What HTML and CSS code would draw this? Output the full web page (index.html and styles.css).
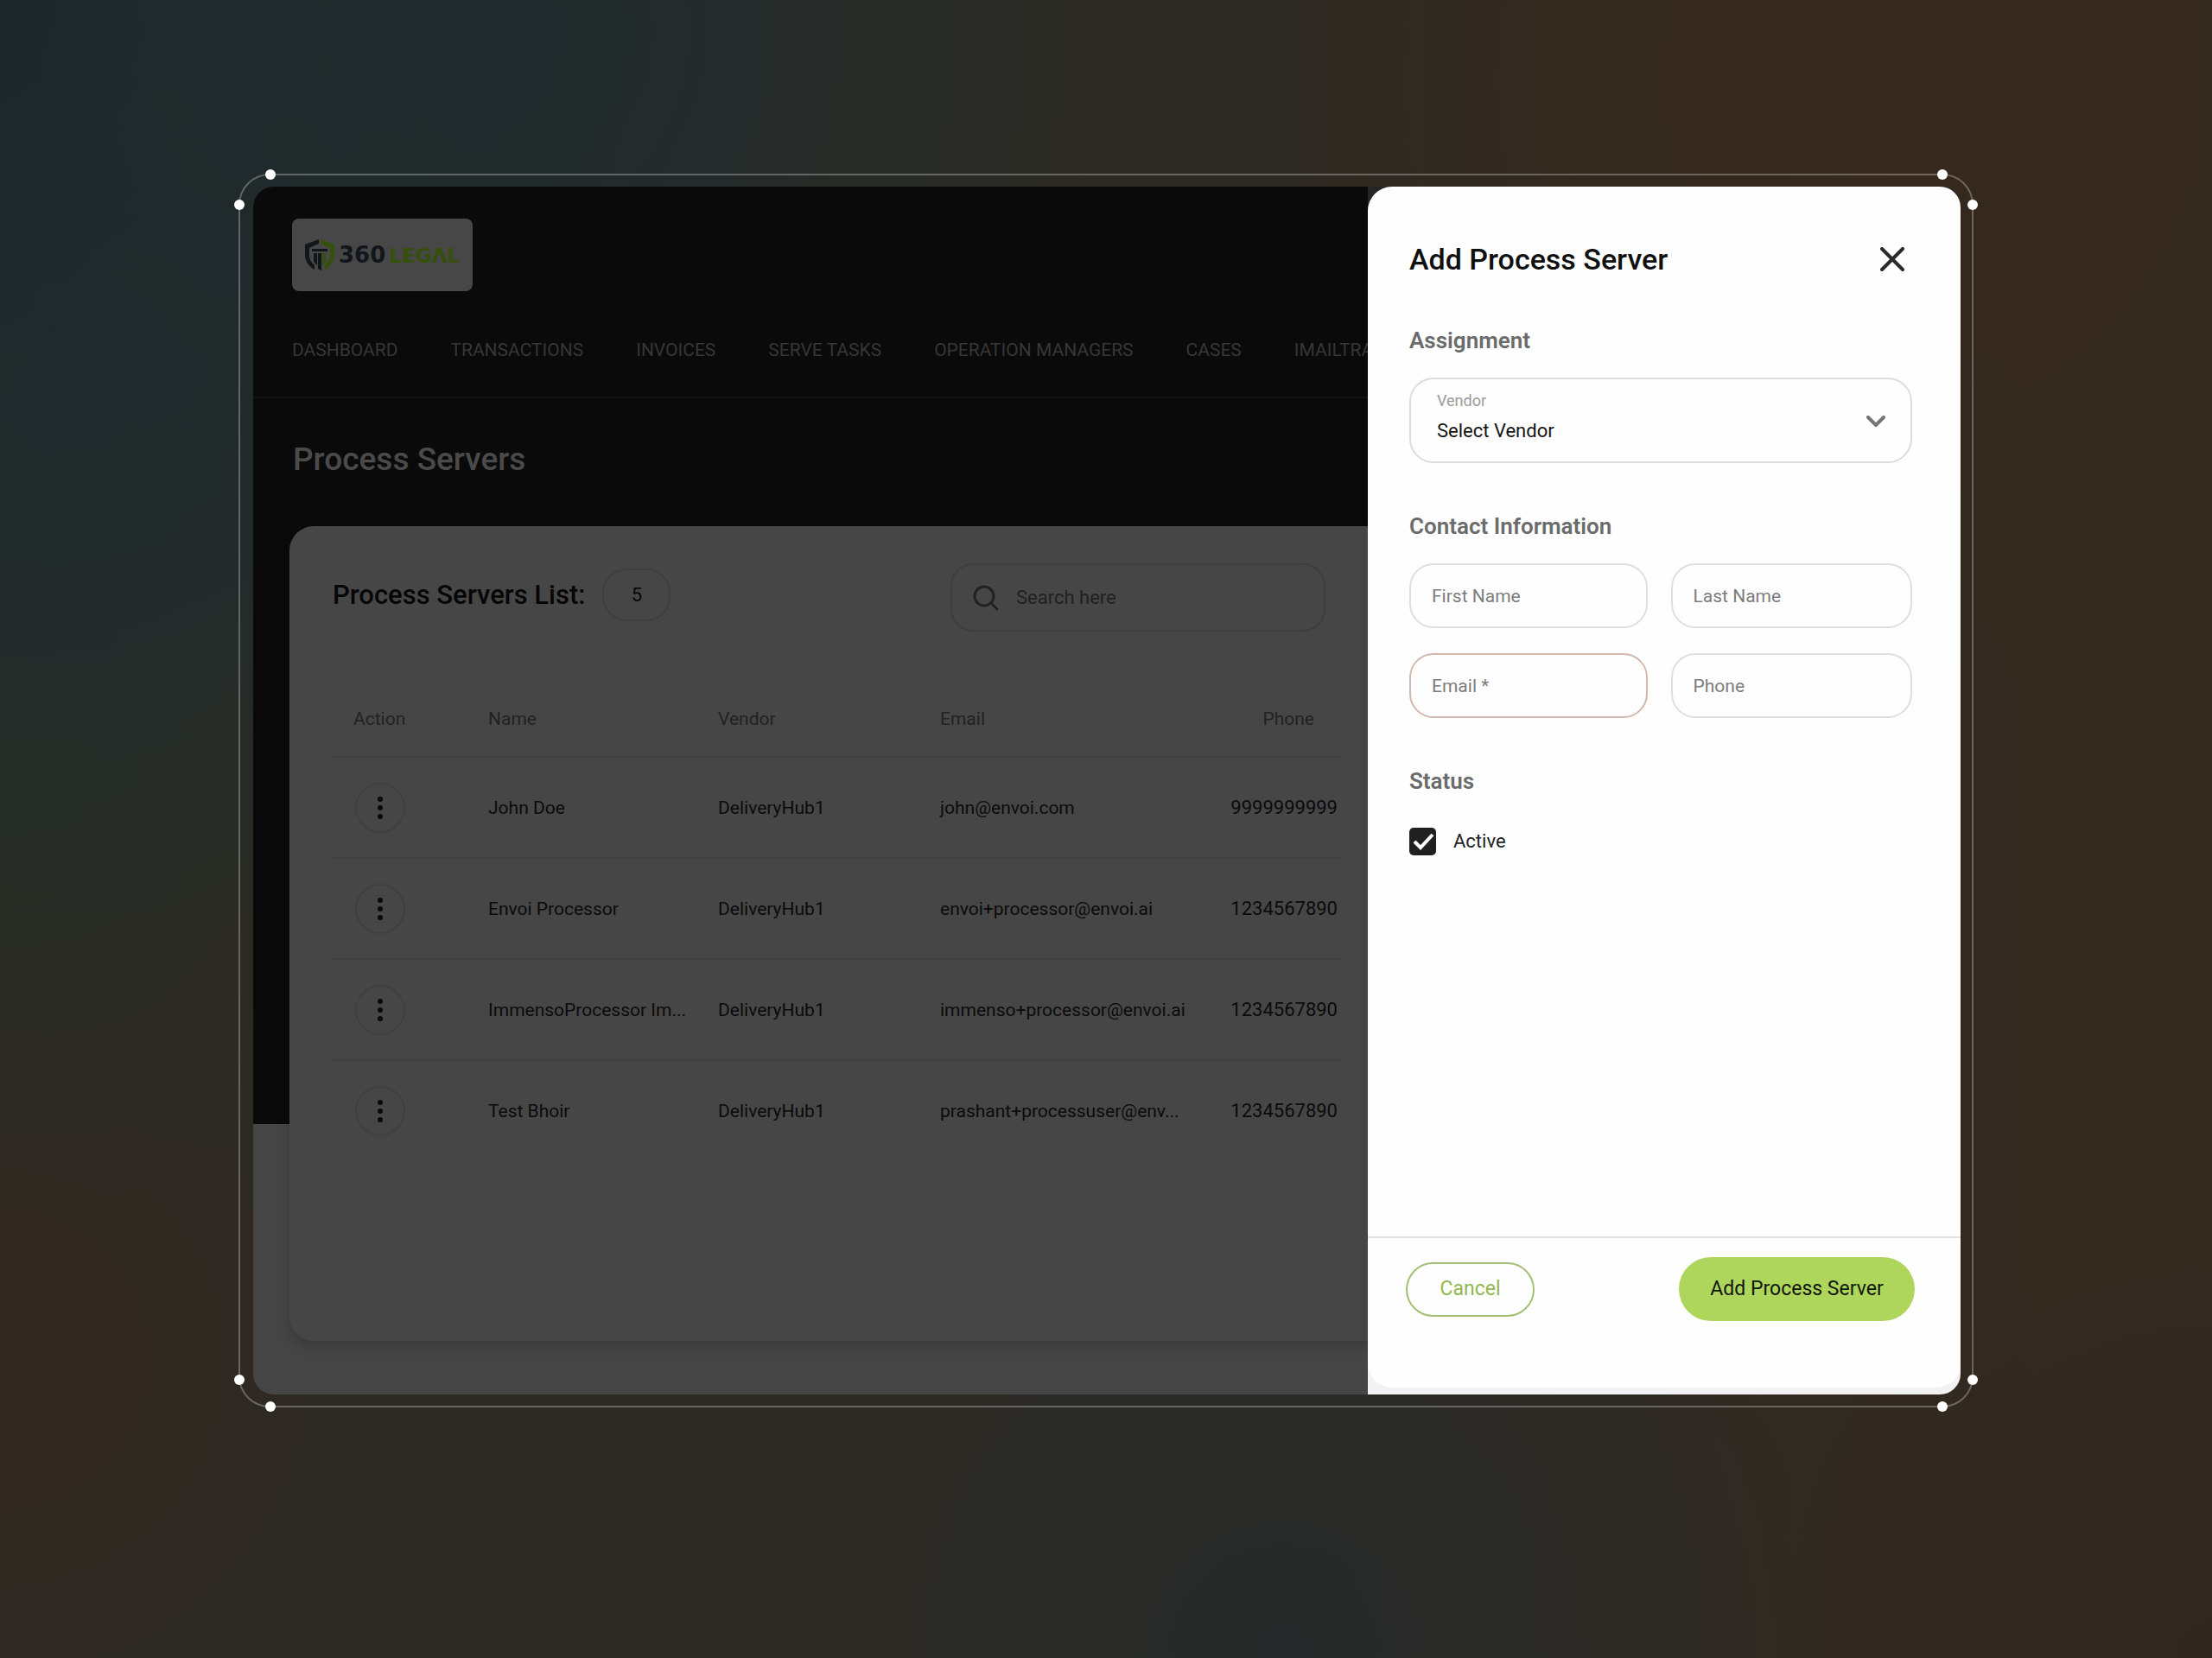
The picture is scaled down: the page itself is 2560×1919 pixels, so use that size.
FILE: index.html
```html
<!DOCTYPE html>
<html lang="en">
<head>
<meta charset="utf-8">
<title>Process Servers</title>
<link rel="stylesheet" href="styles.css">
</head>
<body>
<div class="frame">
  <i class="dot tl-a"></i><i class="dot tl-b"></i><i class="dot tr-a"></i><i class="dot tr-b"></i>
  <i class="dot bl-a"></i><i class="dot bl-b"></i><i class="dot br-a"></i><i class="dot br-b"></i>
  <div class="window">
    <div class="app">
      <header class="header">
        <a class="logo" href="#">
          <svg class="logo-mark" viewBox="0 0 34 36" aria-hidden="true">
            <path class="ink" d="M16 0v5L5 10v8c0 5 2 9 6 12v5C4 31 0 25 0 18V6z"/>
            <path class="lime" d="M18 0v5l11 5v8c0 5-2 9-6 12v5c7-4 11-10 11-17V6z"/>
            <path class="ink" d="M8 11h18v3H8zM10 16h4v14l-4-4zM15 16h4v20l-2-1-2-1z"/>
            <path class="lime" d="M20 16h4v11l-4 4z"/>
          </svg>
          <span class="logo-text"><span class="logo-num">360</span><span class="logo-legal">LEGΛL</span></span>
        </a>
        <nav class="nav">
          <a href="#">DASHBOARD</a><a href="#">TRANSACTIONS</a><a href="#">INVOICES</a><a href="#">SERVE TASKS</a><a href="#">OPERATION MANAGERS</a><a href="#">CASES</a><a href="#">IMAILTRA</a>
        </nav>
      </header>
      <h1 class="page-title">Process Servers</h1>
      <main class="card">
        <div class="toolbar">
          <div class="list-title"><h2>Process Servers List:</h2><span class="count">5</span></div>
          <label class="search">
            <svg viewBox="0 0 30 30" aria-hidden="true"><circle cx="13" cy="13" r="11"/><path d="M21 21l7 7"/></svg>
            <input type="search" placeholder="Search here" aria-label="Search here">
          </label>
        </div>
        <table class="table">
          <colgroup><col class="c-action"><col class="c-name"><col class="c-vendor"><col class="c-email"><col></colgroup>
          <thead>
            <tr><th>Action</th><th>Name</th><th>Vendor</th><th>Email</th><th>Phone</th></tr>
          </thead>
          <tbody>
            <tr><td><button class="more" aria-label="Row actions"><svg viewBox="0 0 8 28"><circle cx="4" cy="4" r="3"/><circle cx="4" cy="14" r="3"/><circle cx="4" cy="24" r="3"/></svg></button></td><td>John Doe</td><td>DeliveryHub1</td><td>john@envoi.com</td><td>9999999999</td></tr>
            <tr><td><button class="more" aria-label="Row actions"><svg viewBox="0 0 8 28"><circle cx="4" cy="4" r="3"/><circle cx="4" cy="14" r="3"/><circle cx="4" cy="24" r="3"/></svg></button></td><td>Envoi Processor</td><td>DeliveryHub1</td><td>envoi+processor@envoi.ai</td><td>1234567890</td></tr>
            <tr><td><button class="more" aria-label="Row actions"><svg viewBox="0 0 8 28"><circle cx="4" cy="4" r="3"/><circle cx="4" cy="14" r="3"/><circle cx="4" cy="24" r="3"/></svg></button></td><td>ImmensoProcessor Im...</td><td>DeliveryHub1</td><td>immenso+processor@envoi.ai</td><td>1234567890</td></tr>
            <tr><td><button class="more" aria-label="Row actions"><svg viewBox="0 0 8 28"><circle cx="4" cy="4" r="3"/><circle cx="4" cy="14" r="3"/><circle cx="4" cy="24" r="3"/></svg></button></td><td>Test Bhoir</td><td>DeliveryHub1</td><td>prashant+processuser@env...</td><td>1234567890</td></tr>
          </tbody>
        </table>
      </main>
    </div>
    <aside class="drawer-wrap">
      <form class="drawer">
        <div class="drawer-body">
          <div class="drawer-head">
            <h2>Add Process Server</h2>
            <button type="button" class="close" aria-label="Close"><svg viewBox="0 0 28 28"><path d="M2 2l24 24M26 2L2 26"/></svg></button>
          </div>
          <h3>Assignment</h3>
          <div class="select">
            <label for="vendor">Vendor</label>
            <select id="vendor"><option>Select Vendor</option></select>
            <svg class="chevron" viewBox="0 0 22 14" aria-hidden="true"><path d="M2 2l9 9 9-9"/></svg>
          </div>
          <h3>Contact Information</h3>
          <div class="fields">
            <input type="text" placeholder="First Name" aria-label="First Name">
            <input type="text" placeholder="Last Name" aria-label="Last Name">
            <input class="required" type="email" placeholder="Email *" aria-label="Email">
            <input type="tel" placeholder="Phone" aria-label="Phone">
          </div>
          <h3>Status</h3>
          <label class="check"><input type="checkbox" checked><svg viewBox="0 0 32 32" aria-hidden="true"><path d="M6 16l7 7L27 8"/></svg>Active</label>
        </div>
        <div class="drawer-foot">
          <button type="button" class="btn-cancel">Cancel</button>
          <button type="submit" class="btn-add">Add Process Server</button>
        </div>
      </form>
    </aside>
  </div>
</div>
</body>
</html>
```
FILE: styles.css
```css
* { box-sizing: border-box; }

body {
  margin: 0;
  min-height: 100vh;
  display: flex;
  padding: 201px 276px 290px;
  font-family: Roboto, "Liberation Sans", sans-serif;
  font-size: 22px;
  line-height: 28px;
  background:
    radial-gradient(circle at 22% 2%, #202b2d 0, transparent 28%),
    radial-gradient(circle at 0% 0%, #1c2629 0, transparent 30%),
    radial-gradient(circle at 3% 25%, #222e2e 0, transparent 22%),
    radial-gradient(circle at 0% 48%, #262b23 0, transparent 18%),
    radial-gradient(circle at 0% 82%, #32271f 0, transparent 14%),
    radial-gradient(circle at 84% 5%, #36281c 0, transparent 26%),
    radial-gradient(circle at 58% 100%, #262929 0, transparent 26%),
    radial-gradient(circle at 100% 100%, #30261e 0, transparent 16%),
    linear-gradient(90deg, #2c2a23 60%, #32291f 92%);
}

h1, h2, h3 { margin: 0; font-weight: 500; }
a { color: inherit; text-decoration: none; }
button, input, select { font: inherit; color: inherit; margin: 0; }
input::placeholder { color: inherit; opacity: 1; }

/* Outline with handles around the window */
.frame {
  position: relative;
  flex: 1;
  min-width: 0;
  display: flex;
  padding: 13px 13px 13px 15px;
  border: 2px solid #ffffff48;
  border-radius: 36px;
}
.dot {
  position: absolute;
  width: 12px;
  height: 12px;
  border-radius: 50%;
  background: #fff;
}
.tl-a, .tr-a { top: -7px; }
.bl-a, .br-a { bottom: -7px; }
.tl-a, .bl-a { left: 29px; }
.tr-a, .br-a { right: 28px; }
.tl-b, .tr-b { top: 28px; }
.bl-b, .br-b { bottom: 24px; }
.tl-b, .bl-b { left: -7px; }
.tr-b, .br-b { right: -7px; }

.window {
  flex: 1;
  min-width: 0;
  display: grid;
  grid-template-columns: minmax(0, 1fr) 686px;
  border-radius: 24px;
  overflow: hidden;
}

/* Dimmed page behind the drawer */
.app {
  display: flex;
  flex-direction: column;
  overflow: hidden;
  background: linear-gradient(#0a0a0a 1085px, #454546 1085px);
}
.header {
  padding: 37px 0 40px 45px;
  border-bottom: 2px solid #131313;
}
.logo {
  display: flex;
  align-items: center;
  gap: 5px;
  width: 209px;
  height: 84px;
  padding: 0 10px 0 15px;
  border-radius: 8px;
  background: #474747;
}
.logo-mark { width: 34px; height: 36px; flex: none; }
.ink { fill: #12161b; }
.lime { fill: #35500a; }
.logo-text {
  display: flex;
  align-items: baseline;
  gap: 4px;
  font: 700 23px/32px "DejaVu Sans", sans-serif;
}
.logo-num { font-size: 26px; color: #12161b; }
.logo-legal { color: #35500a; }
.nav {
  display: flex;
  gap: 61px;
  margin-top: 54px;
  font-size: 21px;
  white-space: nowrap;
  color: #363636;
}
.page-title {
  margin: 47px 0 53px 46px;
  font-size: 37px;
  line-height: 48px;
  color: #4a4a4a;
}
.card {
  flex: 1;
  margin: 0 0 62px 42px;
  padding: 43px 32px 0 50px;
  border-radius: 28px 0 0 28px;
  background: #464646;
  box-shadow: 0 6px 16px #0000002b;
}
.toolbar {
  display: flex;
  justify-content: space-between;
  align-items: flex-start;
  padding-right: 17px;
}
.list-title {
  display: flex;
  align-items: center;
  gap: 20px;
  margin-top: 6px;
  color: #060606;
}
.list-title h2 { font-size: 31px; line-height: 44px; }
.count {
  width: 79px;
  height: 61px;
  display: grid;
  place-items: center;
  border: 2px solid #3f3f3f;
  border-radius: 28px;
}
.search {
  display: flex;
  align-items: center;
  gap: 20px;
  width: 434px;
  height: 79px;
  padding: 0 24px;
  border: 2px solid #3e3e3e;
  border-radius: 26px;
  color: #212121;
}
.search svg { width: 30px; height: 30px; flex: none; fill: none; stroke: #222; stroke-width: 3; stroke-linecap: round; }
.search input { flex: 1; min-width: 0; padding: 0; border: 0; background: none; outline: 0; }

.table {
  width: 100%;
  margin-top: 58px;
  table-layout: fixed;
  border-collapse: collapse;
  font-size: 21px;
  color: #0b0b0b;
}
.c-action { width: 180px; }
.c-name { width: 266px; }
.c-vendor { width: 257px; }
.c-email { width: 313px; }
.table th, .table td { padding: 0; text-align: left; white-space: nowrap; }
.table th { height: 87px; font-weight: 400; color: #222; }
.table td { height: 117px; }
.table tr { border-bottom: 2px solid #404040; }
.table tbody tr:last-child { border-bottom: 0; }
.table th:first-child { padding-left: 24px; }
.table td:first-child { padding-left: 26px; }
.table th:last-child { text-align: right; padding-right: 30px; }
.table td:last-child { text-align: right; padding-right: 3px; font-size: 22px; }
.more {
  display: grid;
  place-items: center;
  width: 58px;
  height: 58px;
  padding: 0;
  border: 2px solid #404040;
  border-radius: 50%;
  background: none;
}
.more svg { width: 8px; height: 28px; fill: #0a0a0a; }

/* Drawer */
.drawer-wrap {
  display: flex;
  padding-bottom: 8px;
  background: linear-gradient(#262626 50%, #f2f2f5 50%);
}
.drawer {
  flex: 1;
  display: flex;
  flex-direction: column;
  border-radius: 28px 0 28px 28px;
  background: #fefefe;
}
.drawer-body { flex: 1; padding: 62px 56px 40px 48px; }
.drawer-head { display: flex; justify-content: space-between; align-items: center; }
.drawer-head h2 { font-size: 34px; line-height: 44px; color: #101010; }
.close { width: 46px; height: 44px; display: grid; place-items: center; padding: 0; border: 0; background: none; }
.close svg { width: 28px; height: 28px; fill: none; stroke: #2a2a2a; stroke-width: 4; stroke-linecap: round; }
.drawer h3 { margin: 57px 0 27px; font-size: 26px; font-weight: 600; line-height: 32px; color: #6a6c6c; }
.drawer .drawer-head + h3 { margin-top: 56px; }

.select { position: relative; }
.select label {
  position: absolute;
  top: 13px;
  left: 32px;
  font-size: 18px;
  color: #9b9b9b;
}
.select select {
  width: 100%;
  height: 99px;
  padding: 24px 60px 0 30px;
  border: 2px solid #dcdcdc;
  border-radius: 28px;
  appearance: none;
  background: none;
  color: #141414;
}
.chevron {
  position: absolute;
  right: 31px;
  top: 44px;
  width: 22px;
  height: 14px;
  fill: none;
  stroke: #757575;
  stroke-width: 4;
  stroke-linecap: round;
  stroke-linejoin: round;
}
.fields { display: grid; grid-template-columns: 276fr 280fr; gap: 29px 27px; }
.fields input {
  width: 100%;
  min-width: 0;
  height: 75px;
  padding: 0 24px;
  border: 2px solid #dfdfdf;
  border-radius: 28px;
  background: none;
  font-size: 21px;
  color: #7d7d7d;
}
.fields .required { border-color: #d2b9ad; }
.drawer .fields + h3 { margin-bottom: 38px; }
.check { display: inline-flex; align-items: center; gap: 20px; height: 32px; color: #222; position: relative; }
.check input { appearance: none; width: 31px; height: 32px; border-radius: 5px; background: #202020; }
.check svg { position: absolute; left: 0; top: 0; width: 32px; height: 32px; fill: none; stroke: #fff; stroke-width: 4; }

.drawer-foot {
  display: flex;
  justify-content: space-between;
  align-items: center;
  padding: 22px 53px 77px 44px;
  border-top: 2px solid #e2e2e2;
}
.drawer-foot button { font-size: 23px; border-radius: 37px; }
.btn-cancel { width: 149px; height: 63px; border: 2px solid #a3bf74; background: none; color: #93b652; }
.btn-add { width: 273px; height: 74px; border: 0; background: #afd65c; color: #10160a; }
```
